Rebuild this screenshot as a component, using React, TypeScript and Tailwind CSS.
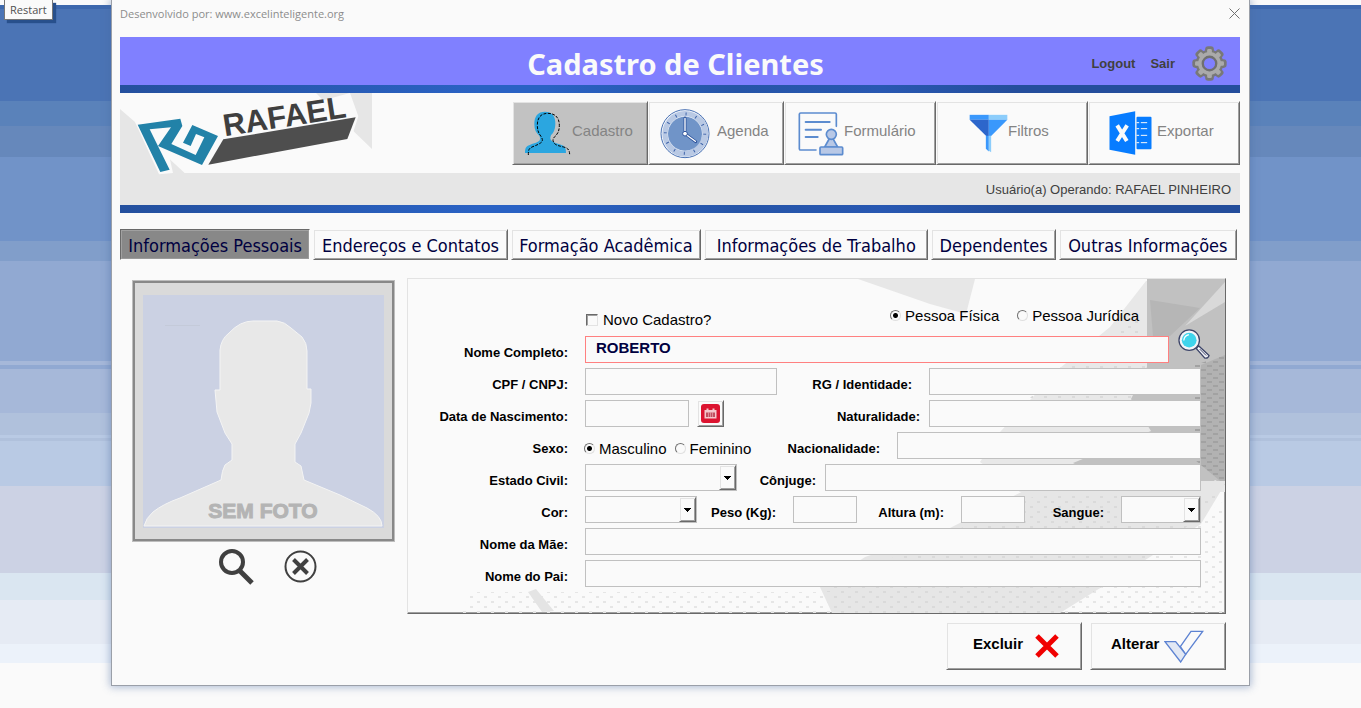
import { useState } from "react";
import type { ReactNode } from "react";
import clsx from "clsx";

const RAISED =
  "border border-t-[#fafafa] border-l-[#fafafa] border-r-[#696969] border-b-[#696969] shadow-[inset_1px_1px_#e3e3e3,inset_-1px_-1px_#a0a0a0]";
const SUNKEN =
  "border border-t-[#696969] border-l-[#696969] border-r-[#fafafa] border-b-[#fafafa] shadow-[inset_1px_1px_#a0a0a0,inset_-1px_-1px_#9a9a9a]";
const FIELD =
  "h-[27px] min-w-0 border border-[#c0c0c0] bg-[#fafafa] px-2 text-[15px] text-[#000040] outline-none";
const CAPTION = "shrink-0 pt-[7px] text-right text-[13px] leading-5 font-bold whitespace-nowrap";

function PersonIcon() {
  return (
    <svg viewBox="72 330 144 138" className="h-[46px] w-12 shrink-0" aria-hidden="true">
      <path
        fill="#2ba6e0"
        d="M135 335c22 0 32 14 31 38-1 18-6 26-13 33-3 8-3 12 2 16 6 6 22 9 32 14 8 4 11 10 11 23H75c0-14 3-19 12-23 10-5 28-8 32-15 2-4 1-10-1-14-10-8-15-18-15-34 0-24 10-38 32-38z"
      />
      <path
        fill="none"
        stroke="#000"
        strokeWidth="3"
        strokeDasharray="9 4"
        d="M85 465c0-15 1-19 11-24 12-5 24-9 30-16 3-5 0-11-3-16-8-10-11-19-11-34 0-24 13-35 31-35 23 0 35 13 35 36 0 16-4 25-13 33-5 5-9 11-3 20 5 7 16 9 29 12 12 3 18 8 18 24"
      />
    </svg>
  );
}

function ClockIcon() {
  return (
    <svg viewBox="478 322 150 153" className="h-[51px] w-[50px] shrink-0" aria-hidden="true">
      <circle cx="553" cy="399" r="72" fill="#f4f7fc" stroke="#4a72b4" strokeWidth="3" />
      <path fill="#b9c9e4" d="M595 342a70 70 0 1 1-98 98A70 70 0 0 0 595 342z" />
      <circle cx="553" cy="399" r="60" fill="none" stroke="#b9c9e4" strokeWidth="16" />
      <circle cx="553" cy="399" r="51" fill="#7094c8" />
      <circle cx="553" cy="399" r="59" fill="none" stroke="#3c62a8" strokeWidth="9" strokeDasharray="3 27.9" />
      <path stroke="#2f549c" strokeWidth="9" strokeLinecap="round" d="M553 399v-47M553 399l32 24" />
      <path stroke="#fff" strokeWidth="4" strokeLinecap="round" d="M553 399v-46M553 399l31 23" />
      <circle cx="553" cy="399" r="7" fill="#fff" stroke="#2f549c" strokeWidth="3" />
    </svg>
  );
}

function FormIcon() {
  return (
    <svg viewBox="896 330 138 135" className="h-[45px] w-[46px] shrink-0" fill="none" stroke="#5c8ccf" strokeWidth="5" aria-hidden="true">
      <path strokeLinecap="round" d="M1011 376v-36q0-4-4-4H904q-4 0-4 4v103q0 4 4 4h46" />
      <path strokeWidth="6" strokeLinecap="round" d="M919 363h72M919 386h46M919 408h36" />
      <path fill="#b8c8e6" d="M991 411l-15 27h39l-15-27z" />
      <circle cx="996" cy="400" r="15" fill="#b8c8e6" />
      <rect x="962" y="438" width="68" height="23" rx="3" fill="#b8c8e6" />
    </svg>
  );
}

function FunnelIcon() {
  return (
    <svg viewBox="208 340 118 117" className="h-[39px] w-[39px] shrink-0" aria-hidden="true">
      <path fill="#3a98fc" d="M210 342h58v15h-58z" />
      <path fill="#8ccdfb" d="M268 342h56v15h-56z" />
      <path fill="#2d66cb" d="M210 357h58v49h-8z" />
      <path fill="#3a98fc" d="M268 357h56l-49 49h-7z" />
      <path fill="#3a98fc" d="M259 405h9v48l-9-8z" />
      <path fill="#8ccdfb" d="M268 405h7v50l-7-4z" />
    </svg>
  );
}

function ExcelIcon() {
  return (
    <svg viewBox="629 331 128 132" className="h-11 w-[43px] shrink-0" aria-hidden="true">
      <path fill="#077cff" d="M630 347l77-15v130l-77-15z" />
      <rect x="711" y="348" width="45" height="98" rx="3" fill="#077cff" />
      <path stroke="#fafafa" strokeWidth="3" d="M711 366h8M711 384h8M711 404h8M711 426h8M724 366h19M724 384h19M724 404h19M724 426h19" />
      <path stroke="#fafafa" strokeWidth="12" d="M653 374l29 47M683 374l-30 47" />
    </svg>
  );
}

function GearIcon() {
  return (
    <svg viewBox="-52 -52 104 104" className="size-[35px]" aria-hidden="true">
      <g fill="#787878">
        {[0, 45, 90, 135, 180, 225, 270, 315].map((a) => (
          <rect key={a} x="-13" y="-51" width="26" height="30" rx="9" transform={`rotate(${a})`} />
        ))}
        <circle r="41" />
      </g>
      <g fill="#aaa">
        {[0, 45, 90, 135, 180, 225, 270, 315].map((a) => (
          <rect key={a} x="-7" y="-43" width="14" height="20" rx="4" transform={`rotate(${a})`} />
        ))}
        <circle r="34" />
      </g>
      <circle r="20" fill="#8080ff" stroke="#707070" strokeWidth="7" />
    </svg>
  );
}

function Logo() {
  return (
    <svg viewBox="360 279 756 240" className="h-20 w-[252px] shrink-0 overflow-visible" role="img" aria-label="Rafael">
      <path fill="#e6e6e6" d="M360 327l58 50 80 90 56 52H360zM948 279h168v168l-60-58z" />
      <path fill="#fafafa" d="M405 366l140-20 110 40 395-107 25 70-25 78-410 74-35 0-100-45 14 63-42 4z" />
      <path
        fill="#2282a8"
        d="M413 374L541 356L547 378L514 432L587 465L613 412L588 402L572 438L549 428L577 375L654 408L606 495L474 438L513 382L449 388L509 509L481 516Z"
      />
      <path fill="#4e4e4e" d="M670 418l397-66-25 65-417 77z" />
      <text
        x="674"
        y="409"
        transform="rotate(-9 674 409)"
        fill="#3f3f3f"
        fontFamily="'Liberation Sans', Arial, sans-serif"
        fontWeight="700"
        fontSize="93"
      >
        RAFAEL
      </text>
    </svg>
  );
}

function PhotoPlaceholder() {
  return (
    <div className="border border-[#bdbdbd]">
      <div className="border-2 border-[#888888] bg-[#dadada] px-2 pt-3 pb-[11px]">
        <svg viewBox="143 295 241 233" className="w-full bg-[#cbd1e3]" role="img" aria-label="Sem foto">
          <path
            fill="#e8e8e8"
            stroke="#f4f4f4"
            d="M253 321h24q8 1 14 7l11 9q5 6 5 14v38h4v14l-2 10-8 20-6 11v18l6 4 3 14 36 15 27 13q15 8 15 18H144q2-8 9-14 10-8 27-14l41-18q1-10 4-15l7-5v-16l-7-11-8-21-2-22h5v-40q1-11 9-17 11-12 24-12z"
          />
          <path stroke="#c4cad9" d="M165 325.500h35" />
          <text
            x="263"
            y="518"
            textAnchor="middle"
            fill="#b4b4b4"
            stroke="#b4b4b4"
            strokeWidth="1"
            fontFamily="'Liberation Sans', Arial, sans-serif"
            fontWeight="700"
            fontSize="21"
          >
            SEM FOTO
          </text>
        </svg>
      </div>
    </div>
  );
}

// halftone texture behind the form, anchored to the panel's right edge
function PanelTexture() {
  return (
    <svg viewBox="408 279 817 334" className="pointer-events-none absolute top-0 right-0 h-full w-[817px]" aria-hidden="true">
      <defs>
        <pattern id="dots-light" width="14" height="10" patternUnits="userSpaceOnUse">
          <path fill="#e6e6e6" d="M1 1h3v2H1zM8 6h3v2H8z" />
        </pattern>
        <pattern id="dots-mid" width="14" height="10" patternUnits="userSpaceOnUse">
          <path fill="#dadada" d="M1 1h3v2H1zM8 6h3v2H8z" />
        </pattern>
        <pattern id="dots-dark" width="12" height="8" patternUnits="userSpaceOnUse">
          <path fill="#a2a2a2" d="M1 1h5v2H1zM7 5h5v2H7z" />
        </pattern>
      </defs>
      <path fill="#e7e7e7" d="M858 279h117l-9 35-36-10z" />
      <path fill="#e8e8e8" d="M1146 281l-36 46-50 41-60 64-20 30 40 30h205V281z" />
      <path fill="url(#dots-mid)" d="M1140 315l-80 53-30 30 120 0z" />
      <path fill="#c1c1c1" d="M1147 279h78v206l-10-5-14 14h-70l-58-31 78-32-20-32 16-32z" />
      <path fill="#b6b6b6" d="M1150 300l50 8-30 28-17 0z" />
      <path fill="#d9d9d9" d="M1225 282l-40 44 40-24z" />
      <path fill="#b2b2b2" d="M1201 365l24-10v130l-24-20z" />
      <path fill="url(#dots-dark)" d="M1195 365l30-10v130l-30-25z" />
      <path fill="#e6e6e6" d="M1045 480l-95 48-85 29-45 30 12 26h228l90-56 51-33 24-40v-3l-24 0z" />
      <path fill="url(#dots-mid)" d="M1035 496l-210 91 7 26h228l90-56 75-62z" />
      <path fill="url(#dots-light)" d="M1225 500l-75 57-90 56h165z" />
      <path fill="url(#dots-light)" d="M470 592h362v21H462z" />
      <path fill="#e4e4e4" d="M528 592l8-3 18 22-12 1z" />
    </svg>
  );
}

function Caption({ htmlFor, className, children }: { htmlFor: string; className: string; children: ReactNode }) {
  return (
    <label htmlFor={htmlFor} className={clsx(CAPTION, className)}>
      {children}
    </label>
  );
}

function Row({ children }: { children: ReactNode }) {
  return <div className="flex h-[27px] items-start">{children}</div>;
}

function Dropdown({ id, className, options }: { id: string; className: string; options: string[] }) {
  return (
    <div className={clsx("relative", className)}>
      <select id={id} defaultValue="" className={clsx(FIELD, "w-full appearance-none")}>
        <option value=""></option>
        {options.map((o) => (
          <option key={o}>{o}</option>
        ))}
      </select>
      <span
        className={clsx(
          RAISED,
          "pointer-events-none absolute top-px right-px flex h-[25px] w-[17px] items-center justify-center bg-[#fafafa]"
        )}
      >
        <svg viewBox="0 0 7 4" className="h-1 w-[7px]" shapeRendering="crispEdges" aria-hidden="true">
          <path d="M0 0h7L3.500 4z" />
        </svg>
      </span>
    </div>
  );
}

function Radio({ name, label, checked, onSelect }: { name: string; label: string; checked: boolean; onSelect: () => void }) {
  return (
    <label className="flex h-5 items-center gap-1 text-[15px] leading-5 whitespace-nowrap">
      <input
        type="radio"
        name={name}
        checked={checked}
        onChange={onSelect}
        className="mb-0.5 size-[11px] appearance-none rounded-full border border-t-[#707070] border-r-[#e0e0e0] border-b-[#e0e0e0] border-l-[#707070] bg-[#fafafa] checked:bg-[radial-gradient(circle,#000_2px,#fafafa_3px)]"
      />
      {label}
    </label>
  );
}

const TOOLBAR = [
  { label: "Cadastro", icon: <PersonIcon />, className: "w-[136px] bg-[#c2c2c2] pl-[11px]" },
  { label: "Agenda", icon: <ClockIcon />, className: "w-[136px] gap-[7px] bg-[#fafafa] pl-[11px]" },
  { label: "Formulário", icon: <FormIcon />, className: "w-[152px] bg-[#fafafa] pl-[13px]" },
  { label: "Filtros", icon: <FunnelIcon />, className: "w-[152px] bg-[#fafafa] pl-8" },
  { label: "Exportar", icon: <ExcelIcon />, className: "w-[152px] gap-[5px] bg-[#fafafa] pl-5" },
];

const TABS = [
  "Informações Pessoais",
  "Endereços e Contatos",
  "Formação Acadêmica",
  "Informações de Trabalho",
  "Dependentes",
  "Outras Informações",
];

function Stripe() {
  return <div className="h-2 bg-[linear-gradient(90deg,#24509e_0%,#2a62c4_32%,#2a62c4_38%,#2655a8_55%,#2858b2_68%,#244e9c_80%)]" />;
}

export default function App() {
  const [tab, setTab] = useState(TABS[0]);
  const [kind, setKind] = useState("fisica");
  const [sex, setSex] = useState("masculino");

  return (
    <div className="relative min-h-screen bg-[#fafafa] bg-[linear-gradient(180deg,#fafafa_5px,#3d68ad_5px_9px,#4b74b5_9px_101px,#5a82ba_101px_126px,#6688bb_126px_157px,#7193c8_157px_241px,#819eca_241px_261px,#91a9d2_261px_361px,#a6b8d9_361px_365px,#91a9d2_365px_369px,#a6b8d9_369px_413px,#b0c1dc_413px_435px,#b9cae4_435px_438px,#b0c1dc_438px_441px,#b9cae4_441px_486px,#ccd2e4_486px_573px,#dae6f1_573px_600px,#e6ebf4_600px_644px,#ecf2fa_644px_663px,#fafafa_663px)] font-['Liberation_Sans',Arial,sans-serif] text-black">
      <button className="absolute top-0 left-1 z-10 h-5 border border-t-0 border-[#767676] bg-[#fafafa] px-[5px] font-['Open_Sans',sans-serif] text-[11px] leading-[18px] text-[#505050] shadow-[3px_3px_1px_#28508c]">
        Restart
      </button>

      <main className="mx-[111px] border border-t-0 border-[#9a9fa8] bg-[#fafafa] pr-[9px] pb-[15px] pl-2 shadow-[0_0_8px_1px_rgba(70,105,160,0.45)]">
        <div className="flex h-[37px] justify-between pt-1">
          <p className="font-['Open_Sans',sans-serif] text-[11px] leading-5 text-[#8c8c8c]">
            Desenvolvido por: www.excelinteligente.org
          </p>
          <button aria-label="Fechar" className="mt-1 size-[11px]">
            <svg viewBox="0 0 11 11" className="size-[11px]" stroke="#707070" aria-hidden="true">
              <path d="M.5.5l10 10M10.500.5l-10 10" />
            </svg>
          </button>
        </div>

        <header>
          <div className="grid h-12 grid-cols-[1fr_auto_1fr] items-center bg-[#8080ff]">
            <h1 className="col-start-2 pt-[5px] pr-[9px] font-['Noto_Sans',sans-serif] text-[29px] leading-8 font-bold text-[#fafafa]">
              Cadastro de Clientes
            </h1>
            <nav className="flex items-center justify-end pt-1 pr-[13px] text-[13px] font-bold text-[#404040]">
              <a href="#logout" className="mr-[15px] pt-px">Logout</a>
              <a href="#sair" className="mr-[17px] pt-px">Sair</a>
              <button aria-label="Configurações">
                <GearIcon />
              </button>
            </nav>
          </div>
          <Stripe />
          <div className="flex h-20 justify-between">
            <Logo />
            <div className="flex pt-2">
              {TOOLBAR.map((item) => (
                <button
                  key={item.label}
                  className={clsx(RAISED, item.className, "flex h-16 items-center text-[15px] text-[#848484]")}
                >
                  {item.icon}
                  <span className="pb-1">{item.label}</span>
                </button>
              ))}
            </div>
          </div>
          <p className="h-8 bg-[#e6e6e6] pt-px pr-[9px] text-right text-[13px] leading-8 text-[#404040]">
            Usuário(a) Operando: RAFAEL PINHEIRO
          </p>
          <Stripe />
        </header>

        <nav className="mt-4 mr-[3px] grid grid-cols-[190fr_194fr_190fr_224fr_124fr_178fr] gap-[3px]">
          {TABS.map((t) => (
            <button
              key={t}
              onClick={() => setTab(t)}
              className={clsx(
                "h-[31px] pt-0.5 font-['DejaVu_Sans_Condensed','DejaVu_Sans',sans-serif] text-[18px] leading-7 whitespace-nowrap text-[#000040]",
                t === tab ? SUNKEN : RAISED,
                t === tab ? "bg-[#888888]" : "bg-[#fafafa]"
              )}
            >
              {t}
            </button>
          ))}
        </nav>

        <div className="mt-[18px] flex">
          <section className="w-[287px] shrink-0 pt-0.5 pr-3 pl-3">
            <PhotoPlaceholder />
            <div className="flex justify-center gap-[30px] pt-[7px] pl-2">
              <button aria-label="Procurar foto">
                <svg viewBox="0 0 35 36" className="h-9 w-[35px]" fill="none" stroke="#404040" aria-hidden="true">
                  <circle cx="13" cy="13" r="11" strokeWidth="4" />
                  <path strokeWidth="5" d="M21 22l12 12" />
                </svg>
              </button>
              <button aria-label="Remover foto">
                <svg viewBox="0 0 33 34" className="h-[34px] w-[33px]" fill="none" stroke="#404040" aria-hidden="true">
                  <circle cx="16.500" cy="16.500" r="15" strokeWidth="2" />
                  <path strokeWidth="4" d="M9.500 9.500l14 14M23.500 9.500l-14 14" />
                </svg>
              </button>
            </div>
          </section>

          <form
            onSubmit={(e) => e.preventDefault()}
            className="relative mr-[14px] min-w-0 grow overflow-hidden border border-t-[#e3e3e3] border-r-[#696969] border-b-[#696969] border-l-[#e3e3e3] pb-[26px] shadow-[inset_-1px_-1px_#a0a0a0]"
          >
            <PanelTexture />
            <div className="relative pr-6">
              <div className="flex h-[57px] items-start justify-between pr-[62px] pl-[178px]">
                <label className="mt-[31px] flex h-5 items-center gap-[5px] text-[15px] whitespace-nowrap">
                  <input
                    type="checkbox"
                    className="size-3 appearance-none border border-t-[#696969] border-r-[#e3e3e3] border-b-[#e3e3e3] border-l-[#696969] bg-[#fafafa] shadow-[inset_1px_1px_#a0a0a0] checked:bg-[#404040]"
                  />
                  Novo Cadastro?
                </label>
                <div className="mt-[27px] flex gap-[18px]">
                  <Radio name="kind" label="Pessoa Física" checked={kind === "fisica"} onSelect={() => setKind("fisica")} />
                  <Radio name="kind" label="Pessoa Jurídica" checked={kind === "juridica"} onSelect={() => setKind("juridica")} />
                </div>
              </div>

              <div className="flex flex-col gap-[5px]">
                <Row>
                  <Caption htmlFor="nome" className="mr-[17px] w-40">Nome Completo:</Caption>
                  <input
                    id="nome"
                    defaultValue="ROBERTO"
                    className="h-[27px] min-w-0 grow border border-[#ff8080] bg-[#fafafa] px-[10px] pb-1 text-[15px] font-bold text-[#000040] outline-none"
                  />
                  <button aria-label="Pesquisar" className="-mt-2 -mr-[9px] ml-[9px] size-8 shrink-0">
                    <svg viewBox="1132 172 100 94" className="size-8" aria-hidden="true">
                      <circle cx="1167" cy="207" r="32" fill="#f4f4f8" stroke="#3c4468" strokeWidth="4" />
                      <circle cx="1167" cy="207" r="23" fill="#40d4ec" />
                      <path fill="none" stroke="#fff" strokeWidth="4" d="M1150 208q2-15 16-18" />
                      <path fill="#f4f4f8" stroke="#3c4468" strokeWidth="4" d="M1189 233l8-8 32 30q-3 10-13 8z" />
                      <path fill="none" stroke="#3c4468" strokeWidth="3" d="M1200 235l20 20" />
                    </svg>
                  </button>
                </Row>
                <Row>
                  <Caption htmlFor="cpf" className="mr-[17px] w-40">CPF / CNPJ:</Caption>
                  <input id="cpf" className={clsx(FIELD, "w-48")} />
                  <Caption htmlFor="rg" className="mr-[17px] w-[135px]">RG / Identidade:</Caption>
                  <input id="rg" className={clsx(FIELD, "grow")} />
                </Row>
                <Row>
                  <Caption htmlFor="nascimento" className="mr-[17px] w-40">Data de Nascimento:</Caption>
                  <input id="nascimento" className={clsx(FIELD, "w-[104px]")} />
                  <button
                    aria-label="Abrir calendário"
                    className={clsx(RAISED, "ml-2 flex size-[27px] shrink-0 items-center justify-center bg-[#fafafa]")}
                  >
                    <svg viewBox="0 0 19 19" className="size-[19px]" aria-hidden="true">
                      <rect width="19" height="19" rx="3" fill="#dc1430" />
                      <path fill="#f4c8cc" d="M3.500 6h2V4.500h2V6h4V4.500h2V6h2v8.500h-12z" />
                      <path fill="#c05060" d="M5 8.500h9V13H5z" />
                      <path stroke="#f4c8cc" strokeWidth="0.5" d="M7.500 8.500V13M9.500 8.500V13M11.500 8.500V13" />
                    </svg>
                  </button>
                  <Caption htmlFor="naturalidade" className="mr-[9px] w-[196px]">Naturalidade:</Caption>
                  <input id="naturalidade" className={clsx(FIELD, "grow")} />
                </Row>
                <Row>
                  <span id="sexo" className={clsx(CAPTION, "mr-4 w-40")}>Sexo:</span>
                  <div role="radiogroup" aria-labelledby="sexo" className="flex w-[170px] shrink-0 gap-2 pt-[7px]">
                    <Radio name="sex" label="Masculino" checked={sex === "masculino"} onSelect={() => setSex("masculino")} />
                    <Radio name="sex" label="Feminino" checked={sex === "feminino"} onSelect={() => setSex("feminino")} />
                  </div>
                  <Caption htmlFor="nacionalidade" className="mr-[17px] w-[126px]">Nacionalidade:</Caption>
                  <input id="nacionalidade" className={clsx(FIELD, "grow")} />
                </Row>
                <Row>
                  <Caption htmlFor="civil" className="mr-[17px] w-40">Estado Civil:</Caption>
                  <Dropdown id="civil" className="w-[152px]" options={["Solteiro", "Casado", "Divorciado", "Viúvo"]} />
                  <Caption htmlFor="conjuge" className="mr-[9px] w-[79px]">Cônjuge:</Caption>
                  <input id="conjuge" className={clsx(FIELD, "grow")} />
                </Row>
                <Row>
                  <Caption htmlFor="cor" className="mr-[17px] w-40">Cor:</Caption>
                  <Dropdown id="cor" className="w-28" options={["Branca", "Preta", "Parda", "Amarela"]} />
                  <Caption htmlFor="peso" className="mr-[17px] w-[79px]">Peso (Kg):</Caption>
                  <input id="peso" className={clsx(FIELD, "w-16")} />
                  <Caption htmlFor="altura" className="mr-[17px] w-[87px]">Altura (m):</Caption>
                  <input id="altura" className={clsx(FIELD, "w-16")} />
                  <Caption htmlFor="sangue" className="mr-[17px] w-[79px]">Sangue:</Caption>
                  <Dropdown id="sangue" className="grow" options={["A+", "A-", "B+", "B-", "AB+", "AB-", "O+", "O-"]} />
                </Row>
                <Row>
                  <Caption htmlFor="mae" className="mr-[17px] w-40">Nome da Mãe:</Caption>
                  <input id="mae" className={clsx(FIELD, "grow")} />
                </Row>
                <Row>
                  <Caption htmlFor="pai" className="mr-[17px] w-40">Nome do Pai:</Caption>
                  <input id="pai" className={clsx(FIELD, "grow")} />
                </Row>
              </div>
            </div>
          </form>
        </div>

        <footer className="mt-2 mr-[14px] flex justify-end gap-2">
          <button className={clsx(RAISED, "flex h-12 w-[136px] items-center gap-3 pl-[26px] text-[15px] font-bold")}>
            <span className="pb-1">Excluir</span>
            <svg viewBox="0 0 24 24" className="size-6" stroke="#f00000" strokeWidth="5" aria-hidden="true">
              <path d="M2 2l20 20M22 2L2 22" />
            </svg>
          </button>
          <button className={clsx(RAISED, "flex h-12 w-[136px] items-center gap-[5px] pl-5 text-[15px] font-bold")}>
            <span className="pb-1">Alterar</span>
            <svg viewBox="1093 567 120 99" className="h-[33px] w-10" stroke="#5c82d2" strokeWidth="4" aria-hidden="true">
              <path fill="#fafafa" d="M1142 617l32-46h35l-51 69z" />
              <path fill="#e2e8f4" d="M1096 602h32l30 38-15 23z" />
            </svg>
          </button>
        </footer>
      </main>
    </div>
  );
}
